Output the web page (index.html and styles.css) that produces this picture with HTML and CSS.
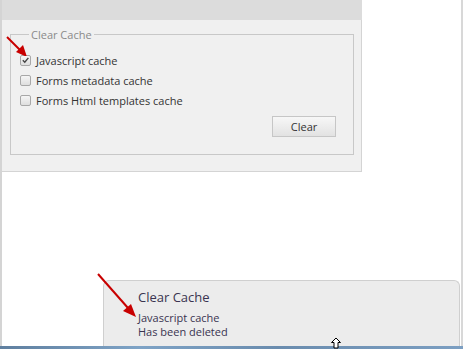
FILE: index.html
```html
<!DOCTYPE html>
<html lang="en">
<head>
    <meta charset="UTF-8">
    <title>Clear Cache</title>
    <link rel="stylesheet" href="styles.css">
</head>
<body>
    <div class="screen">
        <div class="dialog">
            <div class="dialog-head"></div>
            <div class="dialog-body">
                <fieldset class="cache-box">
                    <legend>Clear Cache</legend>
                    <label class="opt">
                        <span class="box checked">
                            <svg viewBox="0 0 10 10" width="10" height="10"><path d="M2 5.2 L4.2 7.4 L8.2 2.6" fill="none" stroke="#444" stroke-width="1.6"/></svg>
                        </span>
                        Javascript cache
                    </label>
                    <label class="opt"><span class="box"></span>Forms metadata cache</label>
                    <label class="opt"><span class="box"></span>Forms Html templates cache</label>
                    <div class="actions">
                        <button class="btn">Clear</button>
                    </div>
                </fieldset>
            </div>
        </div>

        <div class="toast">
            <div class="toast-title">Clear Cache</div>
            <div class="toast-text">Javascript cache</div>
            <div class="toast-text">Has been deleted</div>
        </div>

        <!-- red arrows pointing at the checkbox and the message -->
        <svg class="arrow arrow-one" width="30" height="30" viewBox="0 0 30 30">
            <line x1="3" y1="11" x2="17" y2="25" stroke="#c80000" stroke-width="2"/>
            <polygon points="23,31 12,26 19,19" fill="#c80000"/>
        </svg>
        <svg class="arrow arrow-two" width="50" height="50" viewBox="0 0 50 50">
            <line x1="2" y1="2" x2="32" y2="36" stroke="#c80000" stroke-width="2"/>
            <polygon points="40,45 27,39 35,32" fill="#c80000"/>
        </svg>

        <svg class="cursor" width="12" height="12" viewBox="0 0 12 12">
            <polygon points="6,1 10.5,5.5 8,5.5 8,11 4,11 4,5.5 1.5,5.5" fill="#fff" stroke="#000" stroke-width="1"/>
        </svg>
    </div>
    <div class="taskbar"></div>
</body>
</html>
```

FILE: styles.css
```css
body {
    margin: 0;
    background: #ffffff;
    font-family: 'Open Sans', 'Noto Sans', sans-serif;
    color: #333333;
    width: 463px;
    height: 349px;
    overflow: hidden;
}

.screen {
    position: relative;
    height: 346px;
    border-left: 2px solid #d4d4d4;
    border-right: 2px solid #d8d8d8;
    display: flex;
    flex-direction: column;
    box-sizing: border-box;
}

.dialog {
    width: 360px;
}

.dialog-head {
    height: 20px;
    background: #dcdcdc;
}

.dialog-body {
    background: #f0f0f0;
    padding: 7px 7px 16px 8px;
    border-right: 1px solid #d4d4d4;
    border-bottom: 1px solid #d4d4d4;
}

.cache-box {
    margin: 0;
    border: 1px solid #c8c8c8;
    padding: 8px 17px 17px 9px;
}

.cache-box legend {
    font-size: 11px;
    line-height: 15px;
    color: #8a8a8a;
    padding: 0 2px;
    margin-left: 9px;
}

.opt {
    display: flex;
    align-items: center;
    gap: 5px;
    height: 20px;
    font-size: 11px;
    color: #333333;
}

.box {
    width: 9px;
    height: 9px;
    border: 1px solid #a8a8a8;
    border-radius: 2px;
    background: linear-gradient(#f6f6f6, #dedede);
    display: flex;
    align-items: center;
    justify-content: center;
}

.box svg {
    display: block;
}

.actions {
    display: flex;
    justify-content: flex-end;
    margin-top: 6px;
}

.btn {
    width: 64px;
    height: 21px;
    border: 1px solid #c6c6c6;
    background: linear-gradient(#f7f7f7, #e2e2e2);
    font-family: 'Open Sans', 'Noto Sans', sans-serif;
    font-size: 11px;
    color: #333333;
    padding: 0;
}

.toast {
    margin-top: auto;
    margin-left: 101px;
    margin-right: 1px;
    height: 66px;
    box-sizing: border-box;
    background: #ececec;
    border: 1px solid #cfcfcf;
    border-bottom: none;
    border-radius: 6px 6px 0 0;
    padding: 7px 0 0 34px;
    color: #3a3450;
}

.toast-title {
    font-size: 13px;
    line-height: 18px;
    margin-bottom: 5px;
}

.toast-text {
    font-size: 11px;
    line-height: 14px;
}

.arrow {
    position: absolute;
}

.arrow-one {
    left: 2px;
    top: 26px;
}

.arrow-two {
    left: 94px;
    top: 272px;
}

.cursor {
    position: absolute;
    left: 328px;
    top: 337px;
}

.taskbar {
    height: 3px;
    background: linear-gradient(90deg, #5f7f9f, #7ea3c6 30%, #6a8cae 60%, #7c9fc2);
}
```
